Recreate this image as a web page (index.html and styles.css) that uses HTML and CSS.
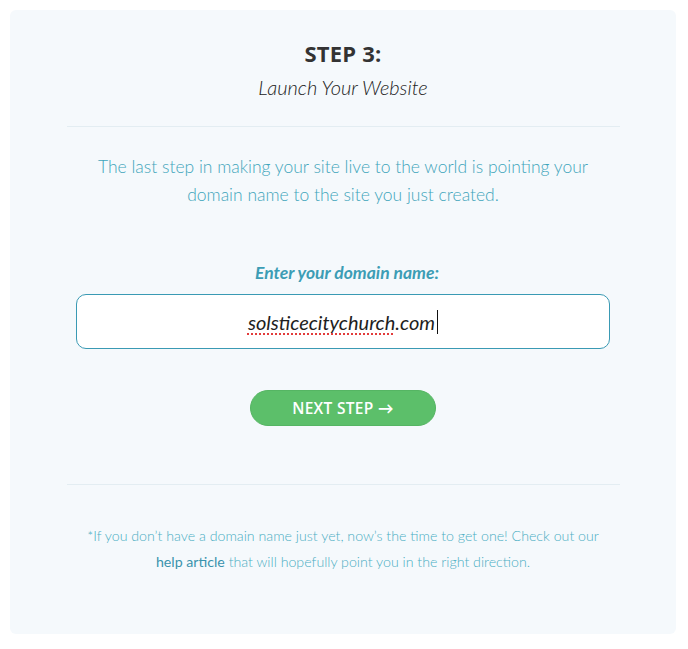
FILE: index.html
```html
<!DOCTYPE html>
<html lang="en">
<head>
  <meta charset="UTF-8">
  <meta name="viewport" content="width=device-width, initial-scale=1.0">
  <title>Launch Your Website</title>
  <link rel="stylesheet" href="styles.css">
</head>
<body>
  <div class="card">
    <h2 class="step-title">STEP 3:</h2>
    <h3 class="step-sub">Launch Your Website</h3>
    <div class="divider"></div>
    <p class="intro">The last step in making your site live to the world is pointing your domain name to the site you just created.</p>
    <form class="domain-form">
      <label for="domain">Enter your domain name:</label>
      <div class="domain-input">
        <span class="typed"><span class="misspelled">solsticecitychurch</span>.com</span><span class="caret"></span>
      </div>
      <button type="button" class="next-btn">NEXT STEP <span class="arrow">&#8594;</span></button>
    </form>
    <div class="divider lower"></div>
    <p class="note">*If you don&rsquo;t have a domain name just yet, now&rsquo;s the time to get one! Check out our <a href="#">help article</a> that will hopefully point you in the right direction.</p>
  </div>
</body>
</html>
```

FILE: styles.css
```css
body {
  font-family: Lato, "Open Sans", sans-serif;
  background-color: #fff;
  margin: 0;
  padding: 10px 12px 15px 10px;
}
.card {
  background-color: #f5f9fc;
  border-radius: 6px;
  height: 624px;
  box-sizing: border-box;
  padding-top: 31px;
  display: flex;
  flex-direction: column;
  align-items: center;
}
.step-title {
  margin: 0;
  font-family: "Open Sans", Lato, sans-serif;
  font-size: 22px;
  line-height: 24px;
  font-weight: 700;
  color: #333;
  letter-spacing: 0.2px;
}
.step-sub {
  margin: 10px 0 0;
  font-size: 20px;
  line-height: 24px;
  font-weight: 300;
  font-style: italic;
  color: #222;
}
.divider {
  width: 553px;
  height: 1px;
  background-color: #e3edf2;
  margin-top: 27px;
}
.divider.lower {
  margin-top: 58px;
}
.intro {
  margin: 26px 0 0;
  width: 520px;
  text-align: center;
  font-size: 17.5px;
  line-height: 28px;
  font-weight: 300;
  color: #3fa5bb;
}
.domain-form {
  display: flex;
  flex-direction: column;
  align-items: center;
}
.domain-form label {
  margin-top: 54px;
  margin-left: 8px;
  font-size: 17.5px;
  line-height: 20px;
  font-weight: 700;
  font-style: italic;
  color: #3c9db5;
}
.domain-input {
  margin-top: 11px;
  width: 534px;
  height: 55px;
  box-sizing: border-box;
  border: 1px solid #3a9ab4;
  border-radius: 10px;
  background-color: #fff;
  display: flex;
  align-items: center;
  justify-content: center;
  font-size: 20px;
  font-style: italic;
  color: #1e1e1e;
}
.misspelled {
  text-decoration: underline dotted #e23b3b;
  text-underline-offset: 4px;
  text-decoration-thickness: 2px;
}
.caret {
  display: inline-block;
  width: 1px;
  height: 24px;
  background-color: #111;
  margin-left: 2px;
}
.next-btn {
  margin-top: 41px;
  width: 186px;
  height: 36px;
  border: 1px solid #55b563;
  border-radius: 18px;
  background-color: #5cbf6a;
  color: #fff;
  font-family: "Open Sans", Lato, sans-serif;
  font-size: 15.5px;
  font-weight: 600;
  letter-spacing: 0.3px;
  cursor: pointer;
}
.next-btn .arrow {
  font-weight: 700;
}
.note {
  margin: 38px 0 0;
  width: 540px;
  text-align: center;
  font-size: 14.2px;
  line-height: 26px;
  font-weight: 300;
  color: #4aaec3;
}
.note a {
  color: #3a93ad;
  font-weight: 400;
  text-decoration: none;
}
```
